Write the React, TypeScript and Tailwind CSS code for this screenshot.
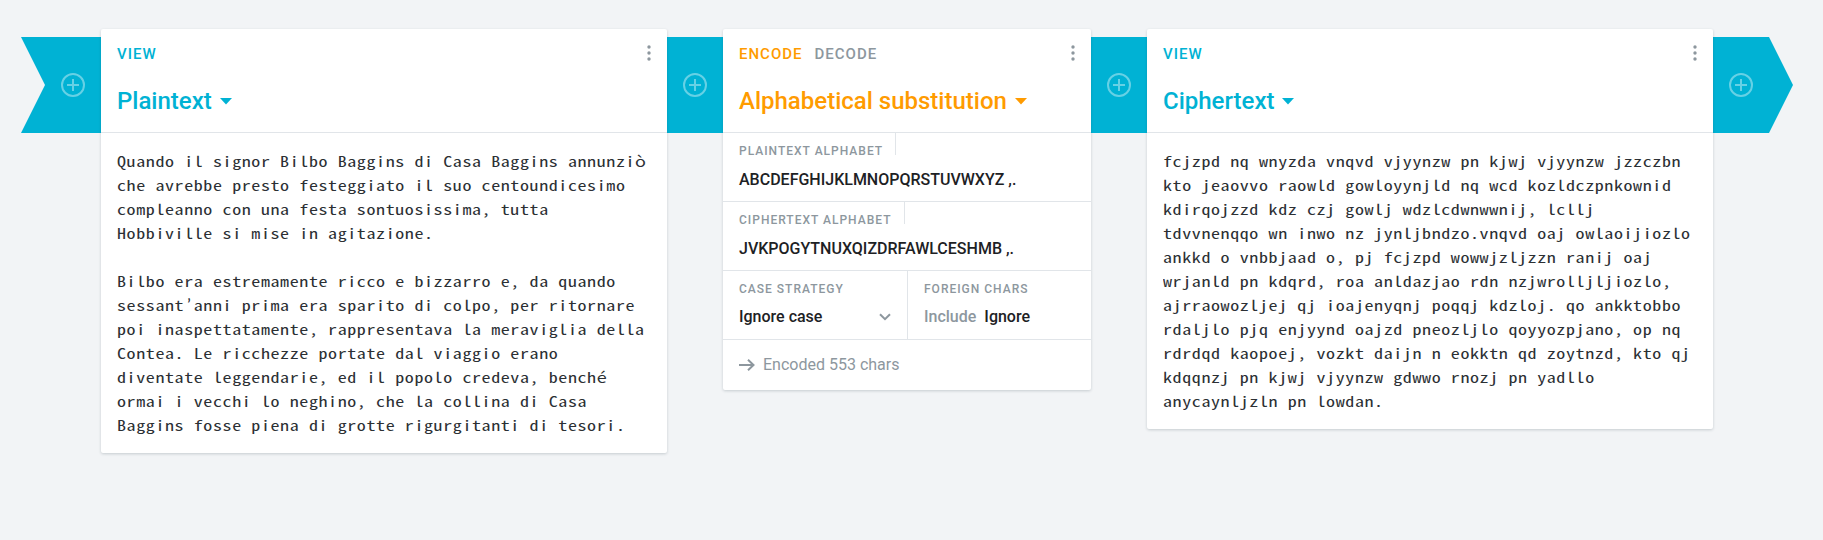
import type { ReactNode } from "react";

type Tone = "view" | "encode";

const PLAINTEXT = [
  "Quando il signor Bilbo Baggins di Casa Baggins annunziò",
  "che avrebbe presto festeggiato il suo centoundicesimo",
  "compleanno con una festa sontuosissima, tutta",
  "Hobbiville si mise in agitazione.",
  "",
  "Bilbo era estremamente ricco e bizzarro e, da quando",
  "sessant’anni prima era sparito di colpo, per ritornare",
  "poi inaspettatamente, rappresentava la meraviglia della",
  "Contea. Le ricchezze portate dal viaggio erano",
  "diventate leggendarie, ed il popolo credeva, benché",
  "ormai i vecchi lo neghino, che la collina di Casa",
  "Baggins fosse piena di grotte rigurgitanti di tesori.",
];

const CIPHERTEXT = [
  "fcjzpd nq wnyzda vnqvd vjyynzw pn kjwj vjyynzw jzzczbn",
  "kto jeaovvo raowld gowloyynjld nq wcd kozldczpnkownid",
  "kdirqojzzd kdz czj gowlj wdzlcdwnwwnij, lcllj",
  "tdvvnenqqo wn inwo nz jynljbndzo.vnqvd oaj owlaoijiozlo",
  "ankkd o vnbbjaad o, pj fcjzpd wowwjzljzzn ranij oaj",
  "wrjanld pn kdqrd, roa anldazjao rdn nzjwrolljljiozlo,",
  "ajrraowozljej qj ioajenyqnj poqqj kdzloj. qo ankktobbo",
  "rdaljlo pjq enjyynd oajzd pneozljlo qoyyozpjano, op nq",
  "rdrdqd kaopoej, vozkt daijn n eokktn qd zoytnzd, kto qj",
  "kdqqnzj pn kjwj vjyynzw gdwwo rnozj pn yadllo",
  "anycaynljzln pn lowdan.",
];

function AddButton() {
  return (
    <button type="button" aria-label="Add" className="block size-6 text-white/40">
      <svg viewBox="0 0 24 24" className="size-6" fill="none" stroke="currentColor">
        <circle cx="12" cy="12" r="11" strokeWidth="2" />
        <path d="M12 6v12M6 12h5M13 12h5" strokeWidth="2" />
      </svg>
    </button>
  );
}

function Pipe({ shape = "middle" }: { shape?: "start" | "middle" | "end" }) {
  const shapes = {
    start: "w-20 justify-end pr-4 [clip-path:polygon(0_0,100%_0,100%_100%,0_100%,24px_50%)]",
    middle: "w-14 justify-center",
    end: "w-20 justify-start pl-4 [clip-path:polygon(0_0,56px_0,100%_50%,56px_100%,0_100%)]",
  };
  return (
    <div className={`mt-2 flex h-24 shrink-0 items-center bg-[#00b2d4] ${shapes[shape]}`}>
      <AddButton />
    </div>
  );
}

function Brick({ tone, modes, title, width, children }: {
  tone: Tone;
  modes: string[];
  title: string;
  width: string;
  children: ReactNode;
}) {
  const color = tone === "view" ? "text-[#00b2d4]" : "text-[#ff9b00]";
  return (
    <section className={`relative z-10 shrink-0 rounded-[2px] bg-white shadow-[0_1px_3px_rgba(30,50,60,0.2)] ${width}`}>
      <header className="h-[104px] border-b border-[#e1e5e9] px-4">
        <div className="flex items-start justify-between pt-[13px]">
          <div className="flex gap-[12px] text-[15px] leading-6 font-medium tracking-[1px]">
            {modes.map((mode, i) => (
              <span key={mode} className={i === 0 ? color : "text-[#8d979e]"}>{mode}</span>
            ))}
          </div>
          <svg width="4" height="16" viewBox="0 0 4 16" className="mt-[3px]" fill="#8d979e">
            <circle cx="2" cy="2" r="1.7" />
            <circle cx="2" cy="8" r="1.7" />
            <circle cx="2" cy="14" r="1.7" />
          </svg>
        </div>
        <h2 className={`mt-[19px] flex items-center text-2xl leading-8 font-medium ${color}`}>
          {title}
          <svg width="12" height="7" viewBox="0 0 12 7" className="ml-2" fill="currentColor">
            <path d="M0 0h12L6 6.5z" />
          </svg>
        </h2>
      </header>
      {children}
    </section>
  );
}

// The CJK mono face is narrow (half an em per letter), so it is spaced and stretched to a 9.6px pitch.
// Its curly apostrophe is full width, so that one is set from Lato in a single cell.
function TextBody({ lines }: { lines: string[] }) {
  return (
    <div className="p-4">
      <div className="w-[420px] origin-left scale-x-125 font-['Noto_Sans_Mono_CJK_SC','Noto_Sans_Mono_CJK_JP',monospace] text-[14.4px] leading-6 tracking-[0.48px] text-[#2c3034]">
        {lines.map((line, row) => (
          <div key={row} className="flex h-6 whitespace-pre">
            {line.split("’").map((part, i) => (
              <span key={i} className="flex">
                {i > 0 && <span className="w-[7.68px] text-center font-[Lato,sans-serif] tracking-normal">’</span>}
                <span>{part}</span>
              </span>
            ))}
          </div>
        ))}
      </div>
    </div>
  );
}

const label = "text-xs leading-4 font-medium tracking-[1px] text-[#8d979e]";

function AlphabetField({ name, value }: { name: string; value: string }) {
  return (
    <div className="h-[69px] border-b border-[#e1e5e9] pl-4">
      <div className="flex">
        <div className={`h-[22px] border-r border-[#e1e5e9] pt-[10px] pr-[12.25px] ${label}`}>{name}</div>
      </div>
      <div className="mt-[13px] text-base leading-6 font-medium text-[#1d2124]">{value}</div>
    </div>
  );
}

export default function App() {
  return (
    <main className="flex h-[540px] w-[1823px] items-start overflow-hidden bg-[#f2f4f6] pt-[29px] pl-[21px] font-[Roboto,sans-serif]">
      <Pipe shape="start" />
      <Brick tone="view" modes={["VIEW"]} title="Plaintext" width="w-[566px]">
        <TextBody lines={PLAINTEXT} />
      </Brick>
      <Pipe />
      <Brick tone="encode" modes={["ENCODE", "DECODE"]} title="Alphabetical substitution" width="w-[368px]">
        <AlphabetField name="PLAINTEXT ALPHABET" value="ABCDEFGHIJKLMNOPQRSTUVWXYZ ,." />
        <AlphabetField name="CIPHERTEXT ALPHABET" value="JVKPOGYTNUXQIZDRFAWLCESHMB ,." />
        <div className="grid h-[69px] grid-cols-2 border-b border-[#e1e5e9]">
          <div className="px-4 pt-[10px]">
            <div className={label}>CASE STRATEGY</div>
            <div className="mt-[8px] flex items-center justify-between text-base leading-6 font-medium text-[#1d2124]">
              Ignore case
              <svg width="12" height="8" viewBox="0 0 12 8" className="mb-px" fill="none" stroke="#8d979e" strokeWidth="2">
                <path d="M1 1.2l5 5 5-5" />
              </svg>
            </div>
          </div>
          <div className="border-l border-[#e1e5e9] px-4 pt-[10px]">
            <div className={label}>FOREIGN CHARS</div>
            <div className="mt-[8px] flex gap-2 text-base leading-6 font-medium text-[#1d2124]">
              <span className="text-[#8d979e]">Include</span>
              <span>Ignore</span>
            </div>
          </div>
        </div>
        <footer className="flex h-[50px] items-center gap-2 px-4 text-base text-[#8d979e]">
          <svg width="16" height="12" viewBox="0 0 16 12" fill="none" stroke="currentColor" strokeWidth="2">
            <path d="M0 6h14.5M9 .8L14.5 6 9 11.2" />
          </svg>
          Encoded 553 chars
        </footer>
      </Brick>
      <Pipe />
      <Brick tone="view" modes={["VIEW"]} title="Ciphertext" width="w-[566px]">
        <TextBody lines={CIPHERTEXT} />
      </Brick>
      <Pipe shape="end" />
    </main>
  );
}
